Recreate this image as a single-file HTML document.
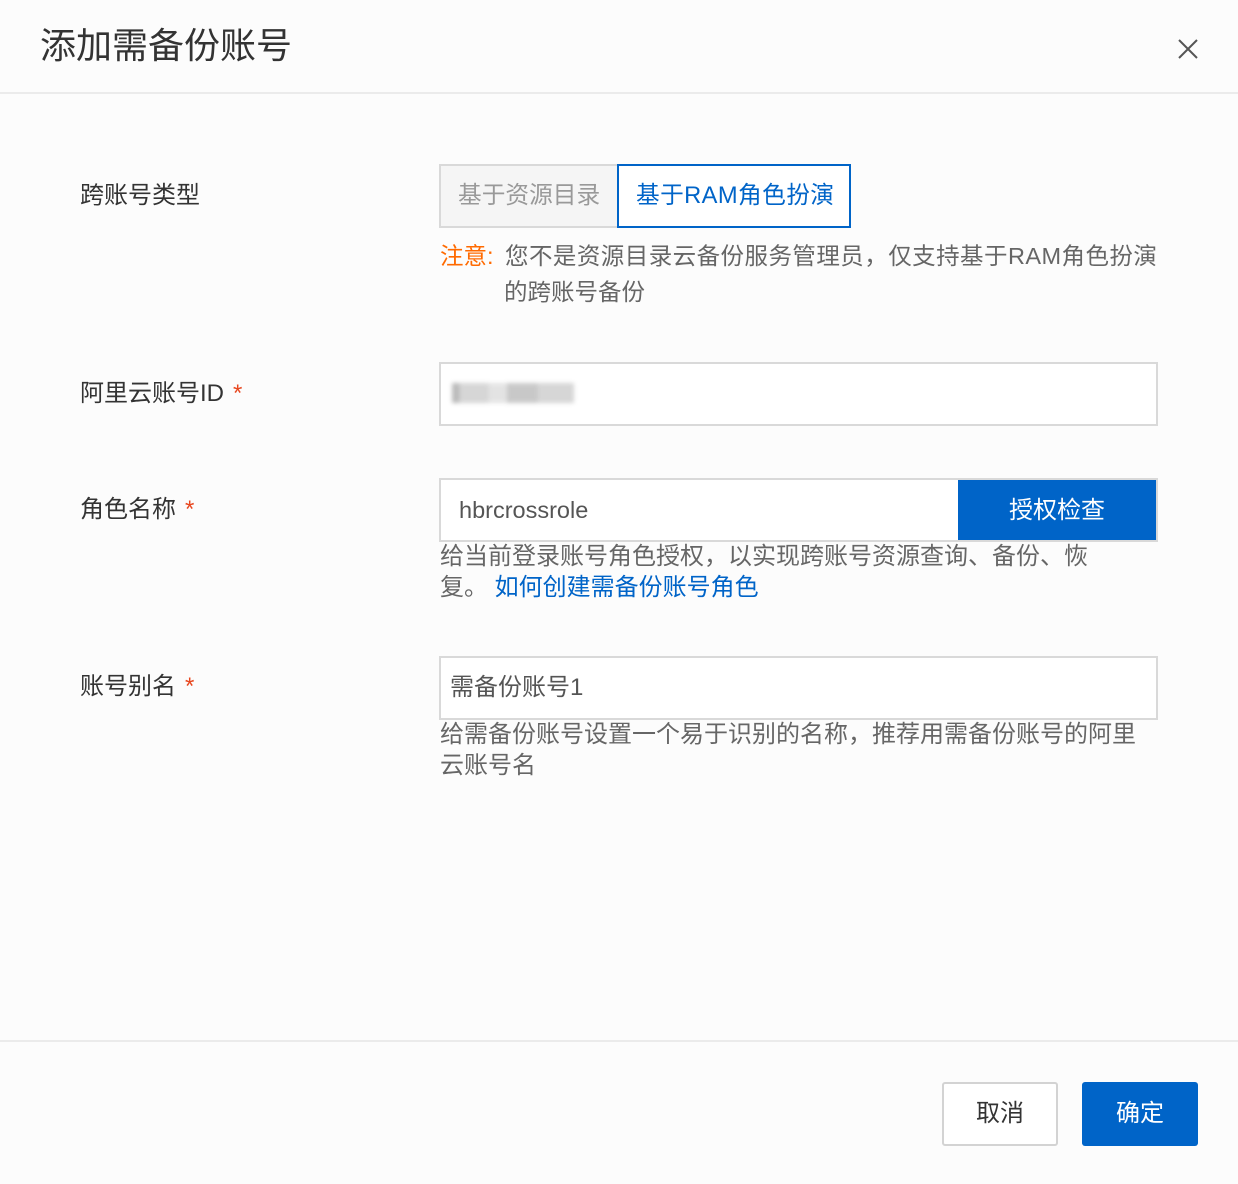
<!DOCTYPE html>
<html><head><meta charset="utf-8"><style>
*{margin:0;padding:0;box-sizing:border-box}
body{width:1238px;height:1184px;background:#fcfcfc;font-family:"Liberation Sans","Noto Sans CJK SC",sans-serif;position:relative;overflow:hidden;color:#333}
.a{position:absolute;white-space:nowrap}
.lab{font-size:24px;color:#333;left:80px}
.star{color:#e8471f;margin-left:9px}
.box{position:absolute;border:2px solid #d9d9d9;background:#fff}
.hint{font-size:24px;color:#666;left:440px;line-height:31px}
</style></head><body>
<div class="a" style="left:40px;top:22px;font-size:36px;color:#333;line-height:48px">添加需备份账号</div>
<svg class="a" style="left:1176px;top:37px" width="24" height="24" viewBox="0 0 24 24"><path d="M3 3L21 21M21 3L3 21" stroke="#555" stroke-width="2"/></svg>
<div class="a" style="left:0;top:92px;width:1238px;height:2px;background:#ebebeb"></div>

<div class="a lab" style="top:180px;line-height:32px">跨账号类型</div>
<div class="box" style="left:439px;top:164px;width:182px;height:64px;background:#f5f5f5;border-right:none"></div>
<div class="a" style="left:458px;top:180px;font-size:23.7px;color:#999;line-height:32px">基于资源目录</div>
<div class="box" style="left:617px;top:164px;width:234px;height:64px;border-color:#0064c8"></div>
<div class="a" style="left:636px;top:180px;font-size:23.7px;color:#0064c8;line-height:32px;letter-spacing:0.4px">基于RAM角色扮演</div>
<div class="a" style="left:440px;top:238px;font-size:23.5px;line-height:36px;color:#ff6a00">注意:</div>
<div class="a" style="left:505px;top:238px;font-size:23.5px;line-height:36px;color:#666;letter-spacing:0.45px">您不是资源目录云备份服务管理员，仅支持基于RAM角色扮演</div>
<div class="a" style="left:504px;top:274px;font-size:23.5px;line-height:36px;color:#666">的跨账号备份</div>

<div class="a lab" style="top:378px;line-height:32px">阿里云账号ID<span class="star">*</span></div>
<div class="box" style="left:439px;top:362px;width:719px;height:64px"></div>
<div class="a" style="left:452px;top:383px;width:122px;height:20px;background:linear-gradient(90deg,#aaa 0 6%,#ccc 6% 30%,#ddd 30% 45%,#bbb 45% 70%,#ccc 70% 100%);filter:blur(2px);opacity:.8"></div>

<div class="a lab" style="top:494px;line-height:32px">角色名称<span class="star">*</span></div>
<div class="box" style="left:439px;top:478px;width:719px;height:64px"></div>
<div class="a" style="left:459px;top:494px;font-size:23.5px;color:#555;line-height:32px">hbrcrossrole</div>
<div class="a" style="left:958px;top:480px;width:198px;height:60px;background:#0064c8;color:#fff;font-size:24px;text-align:center;line-height:62px">授权检查</div>
<div class="a hint" style="top:541px">给当前登录账号角色授权，以实现跨账号资源查询、备份、恢</div>
<div class="a hint" style="top:572px">复。 <span style="color:#0064c8;margin-left:0px">如何创建需备份账号角色</span></div>

<div class="a lab" style="top:671px;line-height:32px">账号别名<span class="star">*</span></div>
<div class="box" style="left:439px;top:656px;width:719px;height:64px"></div>
<div class="a" style="left:450px;top:672px;font-size:24px;color:#555;line-height:32px">需备份账号1</div>
<div class="a hint" style="top:719px">给需备份账号设置一个易于识别的名称，推荐用需备份账号的阿里</div>
<div class="a hint" style="top:750px">云账号名</div>

<div class="a" style="left:0;top:1040px;width:1238px;height:2px;background:#ebebeb"></div>
<div class="a" style="left:942px;top:1082px;width:116px;height:64px;border:2px solid #d3d3d3;border-radius:3px;background:#fff;font-size:24px;color:#333;text-align:center;line-height:60px">取消</div>
<div class="a" style="left:1082px;top:1082px;width:116px;height:64px;border-radius:3px;background:#0064c8;font-size:24px;color:#fff;text-align:center;line-height:64px">确定</div>
</body></html>
